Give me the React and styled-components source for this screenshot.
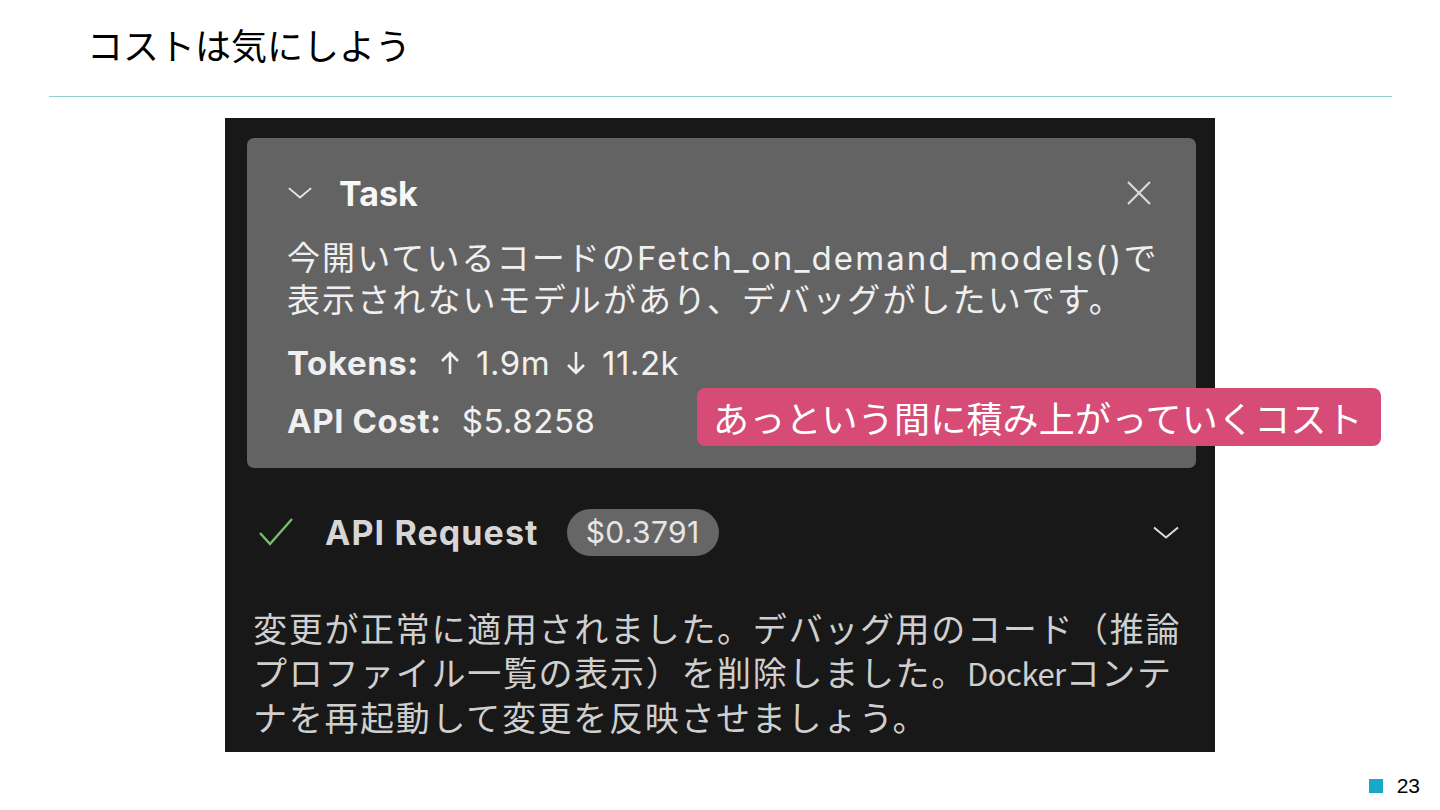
import styled, { createGlobalStyle } from "styled-components";

const GlobalStyle = createGlobalStyle`
  body {
    margin: 0;
    background: #ffffff;
  }
`;

const Slide = styled.div`
  position: relative;
  width: 1440px;
  height: 810px;
  background: #ffffff;
  font-family: "Noto Sans CJK JP", sans-serif;
  overflow: hidden;
`;

const Header = styled.header`
  padding: 21px 0 0 87px;
  height: 96px;
  box-sizing: border-box;
`;

const Title = styled.h1`
  margin: 0;
  font-family: "Noto Sans CJK JP", sans-serif;
  font-weight: 400;
  font-size: 36px;
  line-height: 46px;
  color: #000000;
`;

const Rule = styled.div`
  margin: 0 48px 0 49px;
  height: 1px;
  background: #8fd3d6;
`;

const Shot = styled.div`
  position: relative;
  margin: 21px 0 0 225px;
  width: 990px;
  height: 634px;
  background: #181818;
  padding: 20px 19px 0 22px;
  box-sizing: border-box;
  font-family: "Inter", "Noto Sans CJK JP", sans-serif;
`;

const TaskCard = styled.div`
  position: relative;
  height: 330px;
  background: #636363;
  border-radius: 7px;
  padding: 36px 44px 0 40px;
  box-sizing: border-box;
  color: #f2f2f2;
`;

const CardHead = styled.div`
  display: flex;
  align-items: center;
  height: 38px;
  gap: 26px;
`;

const TaskLabel = styled.span`
  flex: 1;
  font-weight: 700;
  font-size: 34px;
  color: #f7f7f7;
`;

const TaskText = styled.p`
  margin: 25px 0 0;
  font-size: 33px;
  line-height: 42px;
  color: #f0f0f0;
  letter-spacing: 2.1px;
  white-space: nowrap;
`;

const Stats = styled.div`
  margin-top: 13px;
  display: flex;
  flex-direction: column;
`;

const StatLine = styled.div`
  font-size: 33px;
  line-height: 58px;
  color: #f0f0f0;
  display: flex;
  align-items: center;
  gap: 15px;
  letter-spacing: 0.5px;
`;

const StatKey = styled.b`
  font-weight: 700;
  margin-right: 5px;
  letter-spacing: 0.6px;
`;

const Callout = styled.div`
  position: absolute;
  left: 450px;
  top: 250px;
  width: 684px;
  height: 58px;
  background: #d64c76;
  border-radius: 8px;
  box-sizing: border-box;
  padding-left: 16px;
  display: flex;
  align-items: center;
  font-family: "Noto Sans CJK JP", sans-serif;
  font-size: 36px;
  color: #ffffff;
  letter-spacing: 0.2px;
  white-space: nowrap;
`;

const RequestRow = styled.div`
  display: flex;
  align-items: center;
  height: 48px;
  margin: 40px 0 0 11px;
  padding-right: 16px;
`;

const RequestLabel = styled.span`
  margin-left: 31px;
  font-weight: 700;
  font-size: 34px;
  letter-spacing: 1.1px;
  color: #d6d6d6;
`;

const Badge = styled.span`
  margin-left: 28px;
  height: 47px;
  padding: 0 19px;
  border-radius: 24px;
  background: #666666;
  color: #e6e6e6;
  font-size: 30px;
  letter-spacing: 0.4px;
  display: flex;
  align-items: center;
  box-sizing: border-box;
`;

const Spacer = styled.div`
  flex: 1;
`;

const Reply = styled.p`
  margin: 50px 0 0 6px;
  font-family: "Noto Sans CJK JP", sans-serif;
  font-size: 34px;
  line-height: 44px;
  letter-spacing: 1.7px;
  color: #cfcfcf;
  white-space: nowrap;
`;

const Latin = styled.span`
  font-size: 31px;
  letter-spacing: -0.5px;
`;

const Footer = styled.div`
  position: absolute;
  right: 20px;
  bottom: 12px;
  display: flex;
  align-items: center;
  gap: 14px;
  font-family: "Liberation Sans", sans-serif;
  font-size: 21px;
  color: #000;
`;

const PageMark = styled.span`
  width: 14px;
  height: 14px;
  background: #17a9c5;
`;

const Chevron = ({ size = 28, color = "#e8e8e8" }) => (
  <svg width={size} height={size * 0.6} viewBox="0 0 28 16" fill="none">
    <path d="M2 3 L14 13 L26 3" stroke={color} strokeWidth="2" />
  </svg>
);

const Close = () => (
  <svg width="26" height="26" viewBox="0 0 26 26" fill="none">
    <path d="M2 2 L24 24 M24 2 L2 24" stroke="#d9d9d9" strokeWidth="2.2" />
  </svg>
);

const Check = () => (
  <svg width="36" height="30" viewBox="0 0 36 30" fill="none">
    <path d="M2 16 L12 27 L34 2" stroke="#75c06a" strokeWidth="2.4" />
  </svg>
);

const Arrow = ({ down }) => (
  <svg width="22" height="26" viewBox="0 0 22 26" fill="none">
    {down ? (
      <path d="M11 2 V23 M3 15 L11 23 L19 15" stroke="#f0f0f0" strokeWidth="2.6" />
    ) : (
      <path d="M11 24 V3 M3 11 L11 3 L19 11" stroke="#f0f0f0" strokeWidth="2.6" />
    )}
  </svg>
);

export default function App() {
  return (
    <Slide>
      <GlobalStyle />
      <Header>
        <Title>コストは気にしよう</Title>
      </Header>
      <Rule />
      <Shot>
        <TaskCard>
          <CardHead>
            <Chevron size={26} />
            <TaskLabel>Task</TaskLabel>
            <Close />
          </CardHead>
          <TaskText>
            今開いているコードのFetch_on_demand_models()で
            <br />
            表示されないモデルがあり、デバッグがしたいです。
          </TaskText>
          <Stats>
            <StatLine>
              <StatKey>Tokens:</StatKey>
              <Arrow />
              1.9m
              <Arrow down />
              11.2k
            </StatLine>
            <StatLine>
              <StatKey>API Cost:</StatKey>
              $5.8258
            </StatLine>
          </Stats>
          <Callout>あっという間に積み上がっていくコスト</Callout>
        </TaskCard>
        <RequestRow>
          <Check />
          <RequestLabel>API Request</RequestLabel>
          <Badge>$0.3791</Badge>
          <Spacer />
          <Chevron size={28} color="#dcdcdc" />
        </RequestRow>
        <Reply>
          変更が正常に適用されました。デバッグ用のコード（推論
          <br />
          プロファイル一覧の表示）を削除しました。<Latin>Docker</Latin>コンテ
          <br />
          ナを再起動して変更を反映させましょう。
        </Reply>
      </Shot>
      <Footer>
        <PageMark />
        23
      </Footer>
    </Slide>
  );
}
